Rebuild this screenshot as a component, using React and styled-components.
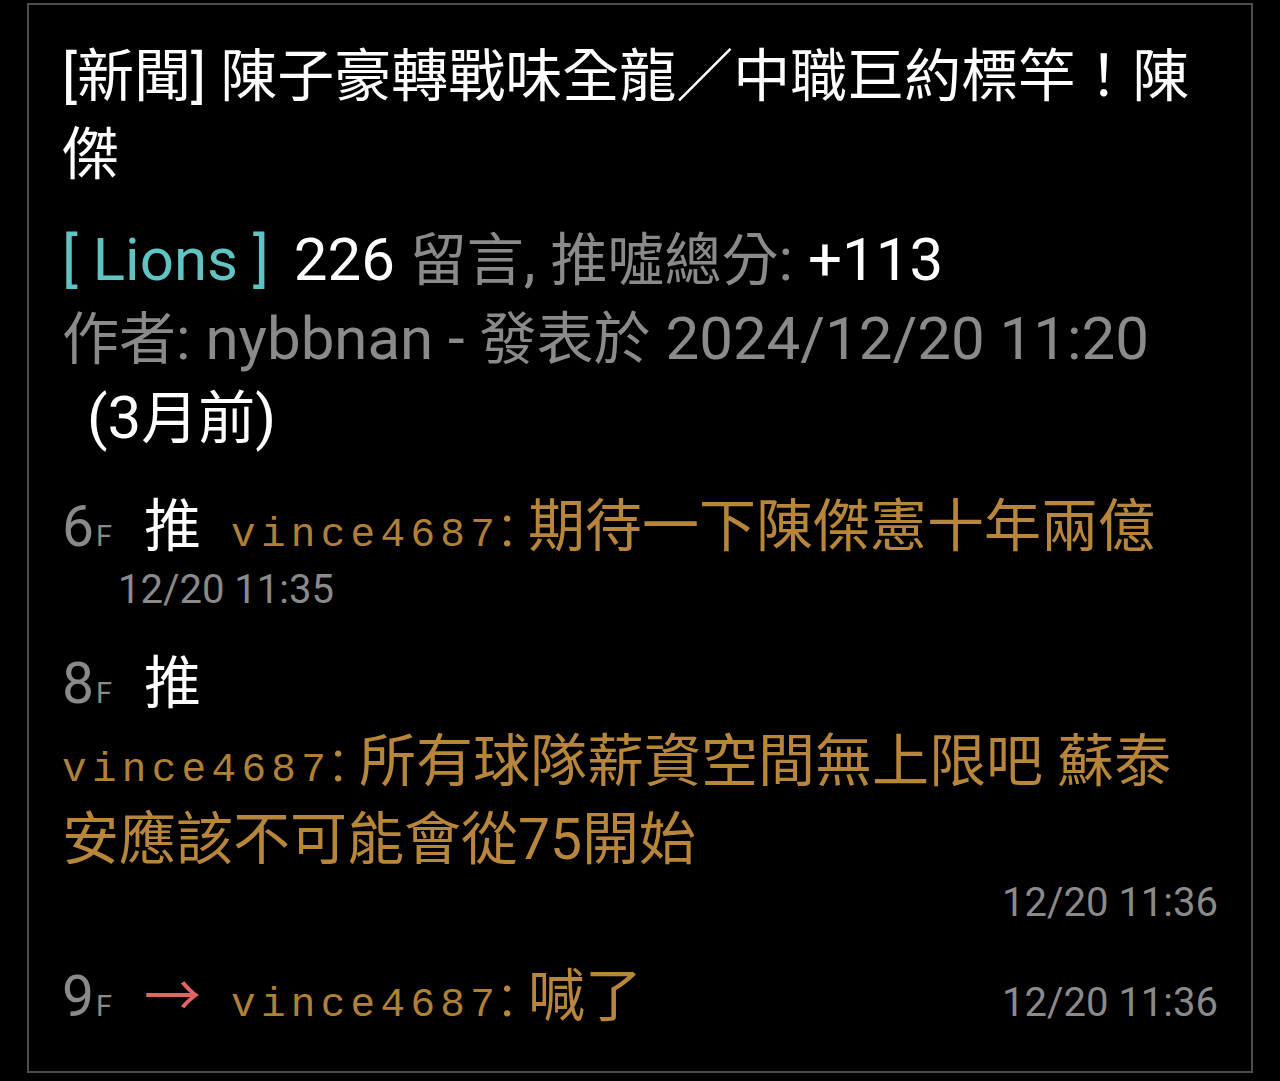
import React from 'react';
import styled, { createGlobalStyle } from 'styled-components';

const GlobalStyle = createGlobalStyle`
  html, body {
    margin: 0;
    padding: 0;
    background: #000;
  }
  body {
    font-family: Roboto, 'Noto Sans CJK TC', sans-serif;
  }
`;

const Page = styled.div`
  min-height: 1081px;
  padding: 3px 27px 0;
  box-sizing: border-box;
  background: #000;
`;

const Frame = styled.div`
  border: 2px solid #4d4d4d;
  padding: 33px 33px 35px;
  font-size: 57px;
  line-height: 78px;
  color: #fff;
`;

const Title = styled.div`
  color: #fff;
`;

const Meta = styled.div`
  margin-top: 27px;
  font-size: 60px;
  color: #8a8a8a;
`;

const Han = styled.span`
  font-size: 57px;
`;

const Board = styled.span`
  color: #5ec4c4;
  margin-right: 10px;
`;

const Strong = styled.span`
  color: #fff;
`;

const Ago = styled.span`
  display: inline-block;
  margin-left: 25px;
  color: #fff;
`;

const CommentList = styled.div`
  margin-top: 30px;
  display: flex;
  flex-direction: column;
  gap: 31px;
`;

const Row = styled.div`
  display: flex;
  align-items: baseline;
  height: 78px;
`;

const Floor = styled.span`
  color: #8a8a8a;
  min-width: 82px;
`;

const FloorMark = styled.span`
  font-size: 29px;
  line-height: 1;
  margin-left: 2px;
`;

const Tag = styled.span`
  color: ${p => (p.$arrow ? '#e46464' : '#fff')};
  margin-right: 30px;
`;

const Content = styled.span`
  color: #b8863a;
`;

const User = styled.span`
  font-family: 'Liberation Mono', monospace;
  font-size: 41px;
  line-height: 1;
  letter-spacing: 5.3px;
  color: #b08038;
`;

const Text = styled.div`
  color: #b8863a;
`;

const Stamp = styled.div`
  font-size: 40px;
  line-height: 48px;
  color: #8a8a8a;
  text-align: ${p => (p.$right ? 'right' : 'left')};
  padding-left: ${p => (p.$right ? '0' : '56px')};
`;

const InlineStamp = styled.span`
  margin-left: auto;
  font-size: 40px;
  line-height: 1;
  color: #8a8a8a;
`;

const comments = [
  { floor: 6, tag: '推', user: 'vince4687', text: '期待一下陳傑憲十年兩億', time: '12/20 11:35', mode: 'inline' },
  { floor: 8, tag: '推', user: 'vince4687', text: '所有球隊薪資空間無上限吧 蘇泰安應該不可能會從75開始', time: '12/20 11:36', mode: 'below' },
  { floor: 9, tag: '→', arrow: true, user: 'vince4687', text: '喊了', time: '12/20 11:36', mode: 'same' },
];

function Body({ user, text }) {
  return (
    <>
      <User>{user}</User>: {text}
    </>
  );
}

function Comment({ c }) {
  const head = (
    <>
      <Floor>
        {c.floor}
        <FloorMark>F</FloorMark>
      </Floor>
      <Tag $arrow={c.arrow}>{c.tag}</Tag>
    </>
  );

  if (c.mode === 'below') {
    return (
      <div>
        <Row>{head}</Row>
        <Text>
          <Body user={c.user} text={c.text} />
        </Text>
        <Stamp $right>{c.time}</Stamp>
      </div>
    );
  }

  if (c.mode === 'same') {
    return (
      <Row>
        {head}
        <Content>
          <Body user={c.user} text={c.text} />
        </Content>
        <InlineStamp>{c.time}</InlineStamp>
      </Row>
    );
  }

  return (
    <div>
      <Row>
        {head}
        <Content>
          <Body user={c.user} text={c.text} />
        </Content>
      </Row>
      <Stamp>{c.time}</Stamp>
    </div>
  );
}

export default function App() {
  return (
    <>
      <GlobalStyle />
      <Page>
        <Frame>
          <Title>[新聞] 陳子豪轉戰味全龍／中職巨約標竿！陳傑</Title>
          <Meta>
            <Board>[ Lions ]</Board> <Strong>226</Strong> <Han>留言</Han>, <Han>推噓總分</Han>: <Strong>+113</Strong>
            <br />
            <Han>作者</Han>: nybbnan - <Han>發表於</Han> 2024/12/20 11:20 <Ago>(3<Han>月前</Han>)</Ago>
          </Meta>
          <CommentList>
            {comments.map(c => (
              <Comment key={c.floor} c={c} />
            ))}
          </CommentList>
        </Frame>
      </Page>
    </>
  );
}
